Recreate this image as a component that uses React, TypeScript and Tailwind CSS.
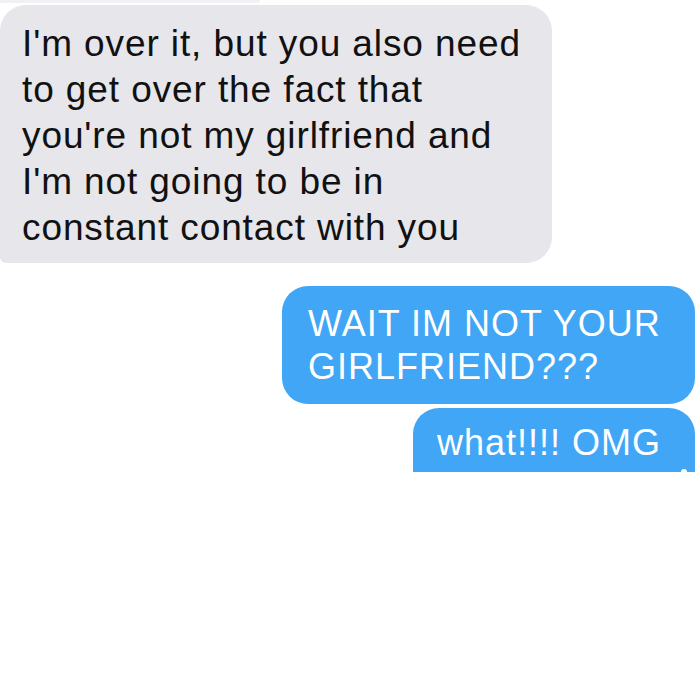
import React from 'react';

const font = { fontFamily: '"Liberation Sans", Arial, sans-serif' };

export default function App() {
  return (
    <div
      className="w-[700px] h-[700px] bg-white flex flex-col overflow-hidden"
      style={font}
    >
      {/* faint edge of previous bubble */}
      <div className="w-[260px] h-[3px] bg-[#f1f1f4] rounded-br-full" />

      {/* incoming message */}
      <div className="mt-[2px] w-[552px] bg-[#e6e6eb] rounded-[26px] rounded-bl-[6px] pl-[22px] pt-[16px] pb-[12px] text-[37px] leading-[46px] tracking-[0.9px] text-[#111111]">
        I'm over it, but you also need
        <br />
        to get over the fact that
        <br />
        you're not my girlfriend and
        <br />
        I'm not going to be in
        <br />
        constant contact with you
      </div>

      {/* outgoing messages */}
      <div className="mt-[23px] mr-[5px] self-end flex flex-col items-end gap-[4px]">
        <div className="w-[413px] bg-[#40a6f5] rounded-[26px] pl-[26px] pt-[16px] pb-[16px] text-[36px] leading-[43px] tracking-[1px] text-white">
          WAIT IM NOT YOUR
          <br />
          GIRLFRIEND???
        </div>
        <div className="relative w-[282px] h-[64px] bg-[#40a6f5] rounded-t-[26px] pl-[24px] pt-[14px] text-[36px] leading-[42px] tracking-[1px] text-white">
          what!!!! OMG
          <span className="absolute right-[8px] bottom-0 w-[6px] h-[3px] bg-white rounded-t-full" />
        </div>
      </div>
    </div>
  );
}
